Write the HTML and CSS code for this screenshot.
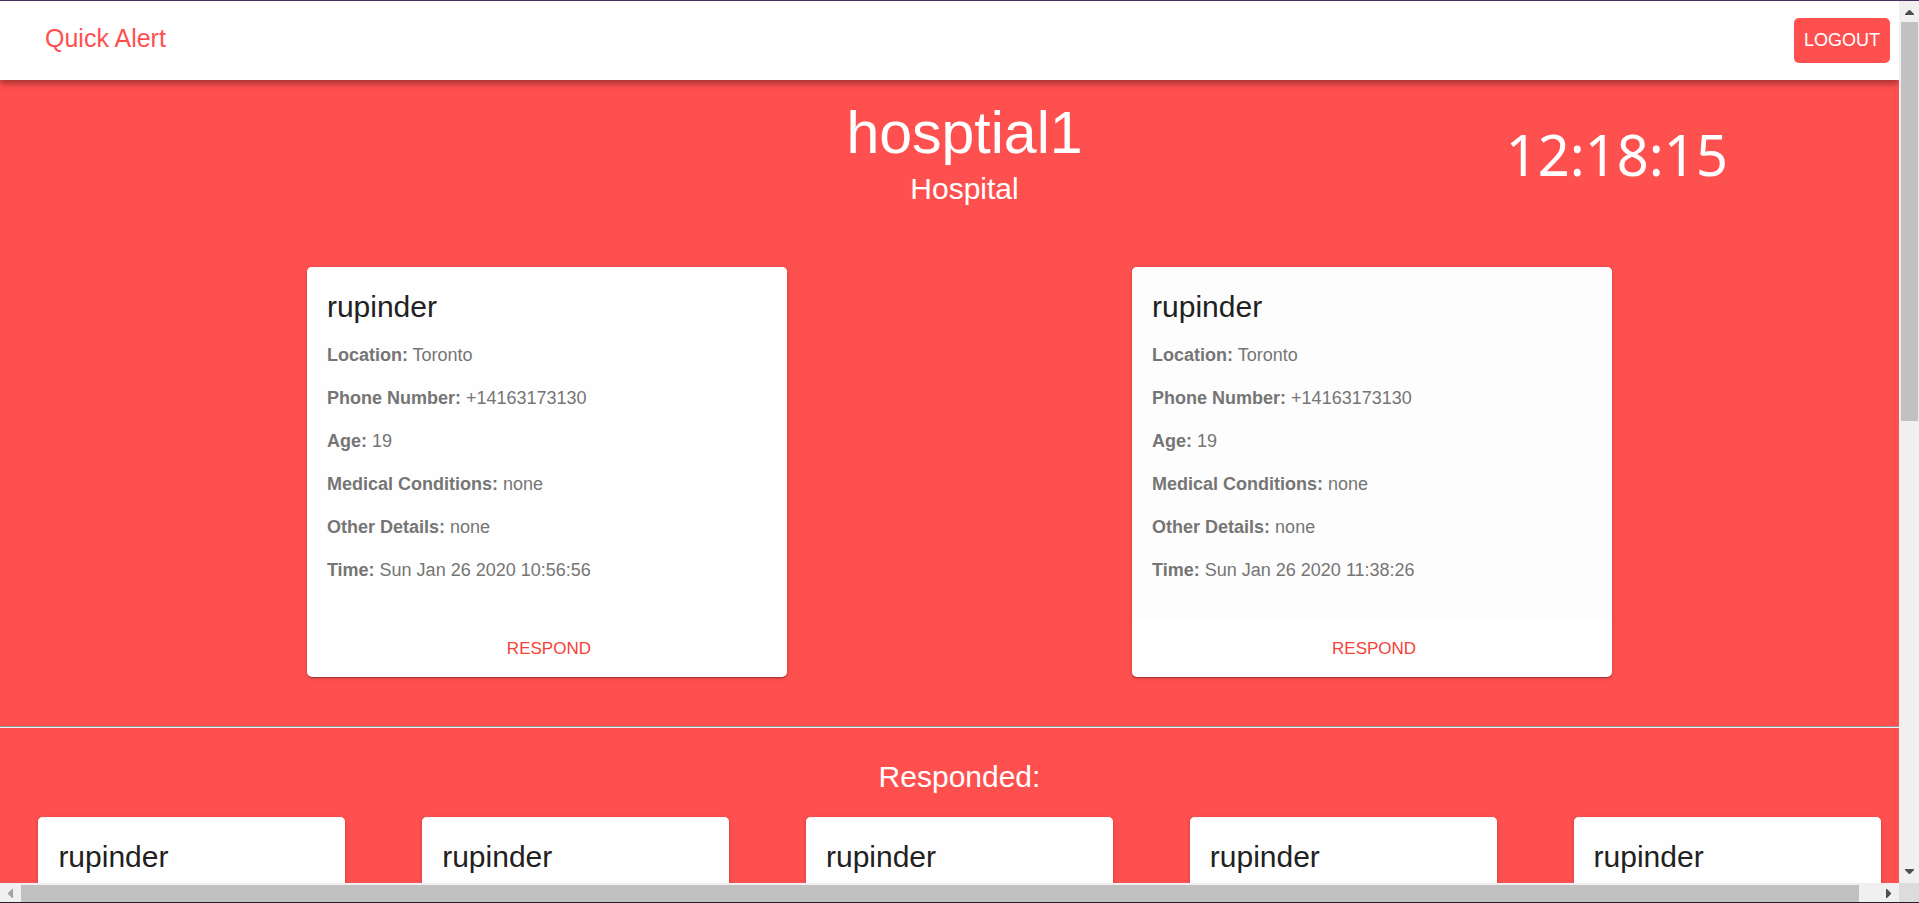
FILE: index.html
```html
<!DOCTYPE html>
<html lang="en">
<head>
<meta charset="utf-8">
<title>Quick Alert</title>
<link rel="stylesheet" href="styles.css">
</head>
<body>
<div class="window">
  <div class="viewport">
    <header class="app-bar">
      <a class="brand" href="#">Quick Alert</a>
      <button class="logout" type="button">LOGOUT</button>
    </header>
    <main class="page">
      <section class="hero">
        <div class="hero-title">
          <h1>hosptial1</h1>
          <h2>Hospital</h2>
        </div>
        <time class="clock">12:18:15</time>
      </section>

      <section class="alerts">
        <article class="card">
          <div class="card-content">
            <h2>rupinder</h2>
            <ul class="details">
              <li><b>Location:</b> Toronto</li>
              <li><b>Phone Number:</b> +14163173130</li>
              <li><b>Age:</b> 19</li>
              <li><b>Medical Conditions:</b> none</li>
              <li><b>Other Details:</b> none</li>
              <li><b>Time:</b> Sun Jan 26 2020 10:56:56</li>
            </ul>
          </div>
          <div class="card-actions"><button class="respond" type="button">RESPOND</button></div>
        </article>
        <article class="card">
          <div class="card-content shaded">
            <h2>rupinder</h2>
            <ul class="details">
              <li><b>Location:</b> Toronto</li>
              <li><b>Phone Number:</b> +14163173130</li>
              <li><b>Age:</b> 19</li>
              <li><b>Medical Conditions:</b> none</li>
              <li><b>Other Details:</b> none</li>
              <li><b>Time:</b> Sun Jan 26 2020 11:38:26</li>
            </ul>
          </div>
          <div class="card-actions"><button class="respond" type="button">RESPOND</button></div>
        </article>
      </section>

      <hr class="divider">

      <h2 class="section-title">Responded:</h2>
      <section class="responded">
        <article class="card"><div class="card-content"><h2>rupinder</h2></div></article>
        <article class="card"><div class="card-content"><h2>rupinder</h2></div></article>
        <article class="card"><div class="card-content"><h2>rupinder</h2></div></article>
        <article class="card"><div class="card-content"><h2>rupinder</h2></div></article>
        <article class="card"><div class="card-content"><h2>rupinder</h2></div></article>
      </section>
    </main>
  </div>

  <div class="scrollbar vertical" aria-hidden="true">
    <svg class="arrow" viewBox="0 0 21 21"><path d="M6 14h9v-1l-4-4h-1l-4 4z"/></svg>
    <div class="track"><div class="thumb"></div></div>
    <svg class="arrow" viewBox="0 0 21 21"><path d="M6 7h9v1l-4 4h-1l-4-4z"/></svg>
  </div>
  <div class="scrollbar horizontal" aria-hidden="true">
    <svg class="arrow disabled" viewBox="0 0 21 19"><path d="M13 6v9h-1l-4-4v-1l4-4z"/></svg>
    <div class="track"><div class="thumb"></div></div>
    <svg class="arrow" viewBox="0 0 21 19"><path d="M8 6v9h1l4-4v-1l-4-4z"/></svg>
  </div>
  <div class="corner"></div>
</div>
</body>
</html>
```
FILE: styles.css
```css
* {
  box-sizing: border-box;
}

body,
h1,
h2,
ul {
  margin: 0;
  padding: 0;
}

body {
  font-family: "Liberation Sans", Arial, sans-serif;
  color: #212121;
}

h1,
h2 {
  font-weight: 400;
}

/* Window frame: page area with a scrollbar on two sides */
.window {
  display: grid;
  grid-template-columns: minmax(0, 1fr) 20px;
  grid-template-rows: minmax(0, 1fr) 19px;
  height: 100vh;
  border-top: 1px solid #46305f;
  border-bottom: 1px solid #232325;
  background: #f0f0f0;
}

.viewport {
  overflow: hidden;
  background: #ff5050;
}

/* App bar */
.app-bar {
  position: relative;
  display: flex;
  justify-content: space-between;
  align-items: flex-start;
  padding: 17px 9px 17px 45px;
  background: #fff;
  box-shadow: 0 3px 5px -1px rgba(0, 0, 0, 0.2),
    0 5px 6px 0 rgba(0, 0, 0, 0.14),
    0 1px 12px 0 rgba(0, 0, 0, 0.12);
}

.brand {
  font-size: 25px;
  line-height: 40px;
  color: #ff5050;
  text-decoration: none;
}

.logout {
  padding: 0 10px;
  border: 0;
  border-radius: 5px;
  background: #ff5050;
  color: #fff;
  font-family: inherit;
  font-size: 18px;
  line-height: 45px;
}

/* Page */
.page {
  width: 100vw;
}

.hero {
  display: grid;
  grid-template-columns: repeat(3, 1fr);
  padding: 17px 0 58px 10px;
  color: #fff;
  text-align: center;
}

.hero-title {
  grid-column: 2;
}

.hero h1 {
  font-size: 59px;
  line-height: 72px;
}

.hero h2,
.section-title {
  font-size: 30px;
  line-height: 40px;
}

.clock {
  padding: 21px 0 0 32px;
  font-family: "Noto Sans", sans-serif;
  font-size: 56px;
  line-height: 72px;
}

.alerts {
  display: grid;
  grid-template-columns: 1fr 1fr;
  justify-items: center;
  padding: 0 7% 49px;
}

.alerts .card {
  width: 100%;
  max-width: 480px;
}

.card {
  overflow: hidden;
  border-radius: 5px;
  background: #fff;
  box-shadow: 0 1px 4px 0 rgba(0, 0, 0, 0.2),
    0 1px 1px 0 rgba(0, 0, 0, 0.14),
    0 2px 1px -1px rgba(0, 0, 0, 0.12);
}

.card-content {
  padding: 20px 20px 36px;
  background: #fefefe;
}

.card-content.shaded {
  background: #fdfdfd;
}

.card h2 {
  font-size: 30px;
  line-height: 40px;
}

.details {
  display: flex;
  flex-direction: column;
  gap: 18px;
  margin-top: 16px;
  list-style: none;
  font-size: 18px;
  line-height: 25px;
  color: #757575;
}

.card-actions {
  display: flex;
  justify-content: center;
  padding: 11px 8px 9px 12px;
}

.respond {
  padding: 0 10px;
  border: 0;
  background: none;
  color: #f44336;
  font-family: inherit;
  font-size: 17px;
  line-height: 38px;
}

.divider {
  margin: 0;
  border: 0;
  border-top: 1px solid #9a9a9a;
  border-bottom: 1px solid #eee;
}

.section-title {
  padding: 29px 0 20px;
  color: #fff;
  text-align: center;
}

.responded {
  display: grid;
  grid-template-columns: repeat(5, 1fr);
}

.responded .card {
  margin: 0 10%;
}

/* Scrollbars */
.scrollbar {
  display: flex;
  background: #f0f0f0;
}

.vertical {
  flex-direction: column;
}

.arrow {
  flex: none;
  width: 21px;
  height: 21px;
  fill: #505050;
}

.horizontal .arrow {
  height: 19px;
}

.arrow.disabled {
  fill: #a3a3a3;
}

.track {
  flex: 1;
}

.thumb {
  background: #c1c1c1;
}

.vertical .thumb {
  height: 47.5%;
  margin: 0 1px 0 2px;
}

.horizontal .track {
  padding-top: 2px;
}

.horizontal .thumb {
  width: 99%;
  height: 100%;
}

.corner {
  background: #dcdcdc;
}
```
